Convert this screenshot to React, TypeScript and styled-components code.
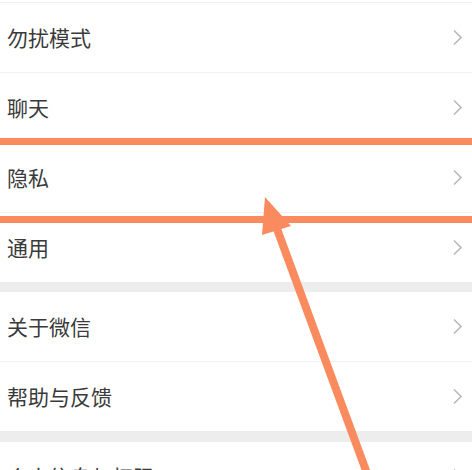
import React from "react";
import styled, { createGlobalStyle } from "styled-components";

const Global = createGlobalStyle`
  html, body { margin: 0; padding: 0; background: #ffffff; }
  body { font-family: "Noto Sans CJK SC", "Noto Sans", sans-serif; overflow: hidden; }
`;

const Page = styled.div`
  position: relative;
  width: 472px;
  height: 470px;
  overflow: hidden;
  background: #ededed;
`;

const Group = styled.div<{ $top?: number; $gap?: number }>`
  background: #ffffff;
  padding-top: ${(p) => p.$top ?? 0}px;
  margin-top: ${(p) => p.$gap ?? 0}px;
`;

const Row = styled.div<{ $divider?: boolean }>`
  height: 69px;
  display: flex;
  align-items: center;
  justify-content: space-between;
  padding: 0 9px 0 7px;
  border-top: ${(p) => (p.$divider ? "1px solid #f1f1f1" : "none")};
`;

const Label = styled.span`
  font-size: 21px;
  color: #3a3a3a;
  letter-spacing: 0;
  line-height: 1;
`;

const Chevron = () => (
  <svg width="11" height="17" viewBox="0 0 11 17">
    <path d="M2 1.5 L9 8.5 L2 15.5" fill="none" stroke="#b9b9b9" strokeWidth="1.6" />
  </svg>
);

const Overlay = styled.svg`
  position: absolute;
  left: 0;
  top: 0;
  pointer-events: none;
`;

const groups = [
  { top: 2, gap: 0, items: ["勿扰模式", "聊天", "隐私", "通用"] },
  { top: 0, gap: 10, items: ["关于微信", "帮助与反馈"] },
  { top: 0, gap: 11, items: ["个人信息与权限"] },
];

export default function App() {
  return (
    <Page>
      <Global />
      {groups.map((g, gi) => (
        <Group key={gi} $top={g.top} $gap={g.gap}>
          {g.items.map((t, i) => (
            <Row key={t} $divider={gi === 0 || i > 0}>
              <Label>{t}</Label>
              <Chevron />
            </Row>
          ))}
        </Group>
      ))}
      <Overlay width="472" height="470" viewBox="0 0 472 470">
        <rect x="0" y="138" width="472" height="7" fill="#f98b5f" />
        <rect x="0" y="216" width="472" height="7" fill="#f98b5f" />
        <line x1="277" y1="229" x2="368" y2="476" stroke="#f98b5f" strokeWidth="8" />
        <polygon points="265,197 262,235 291,226" fill="#f98b5f" />
      </Overlay>
    </Page>
  );
}
